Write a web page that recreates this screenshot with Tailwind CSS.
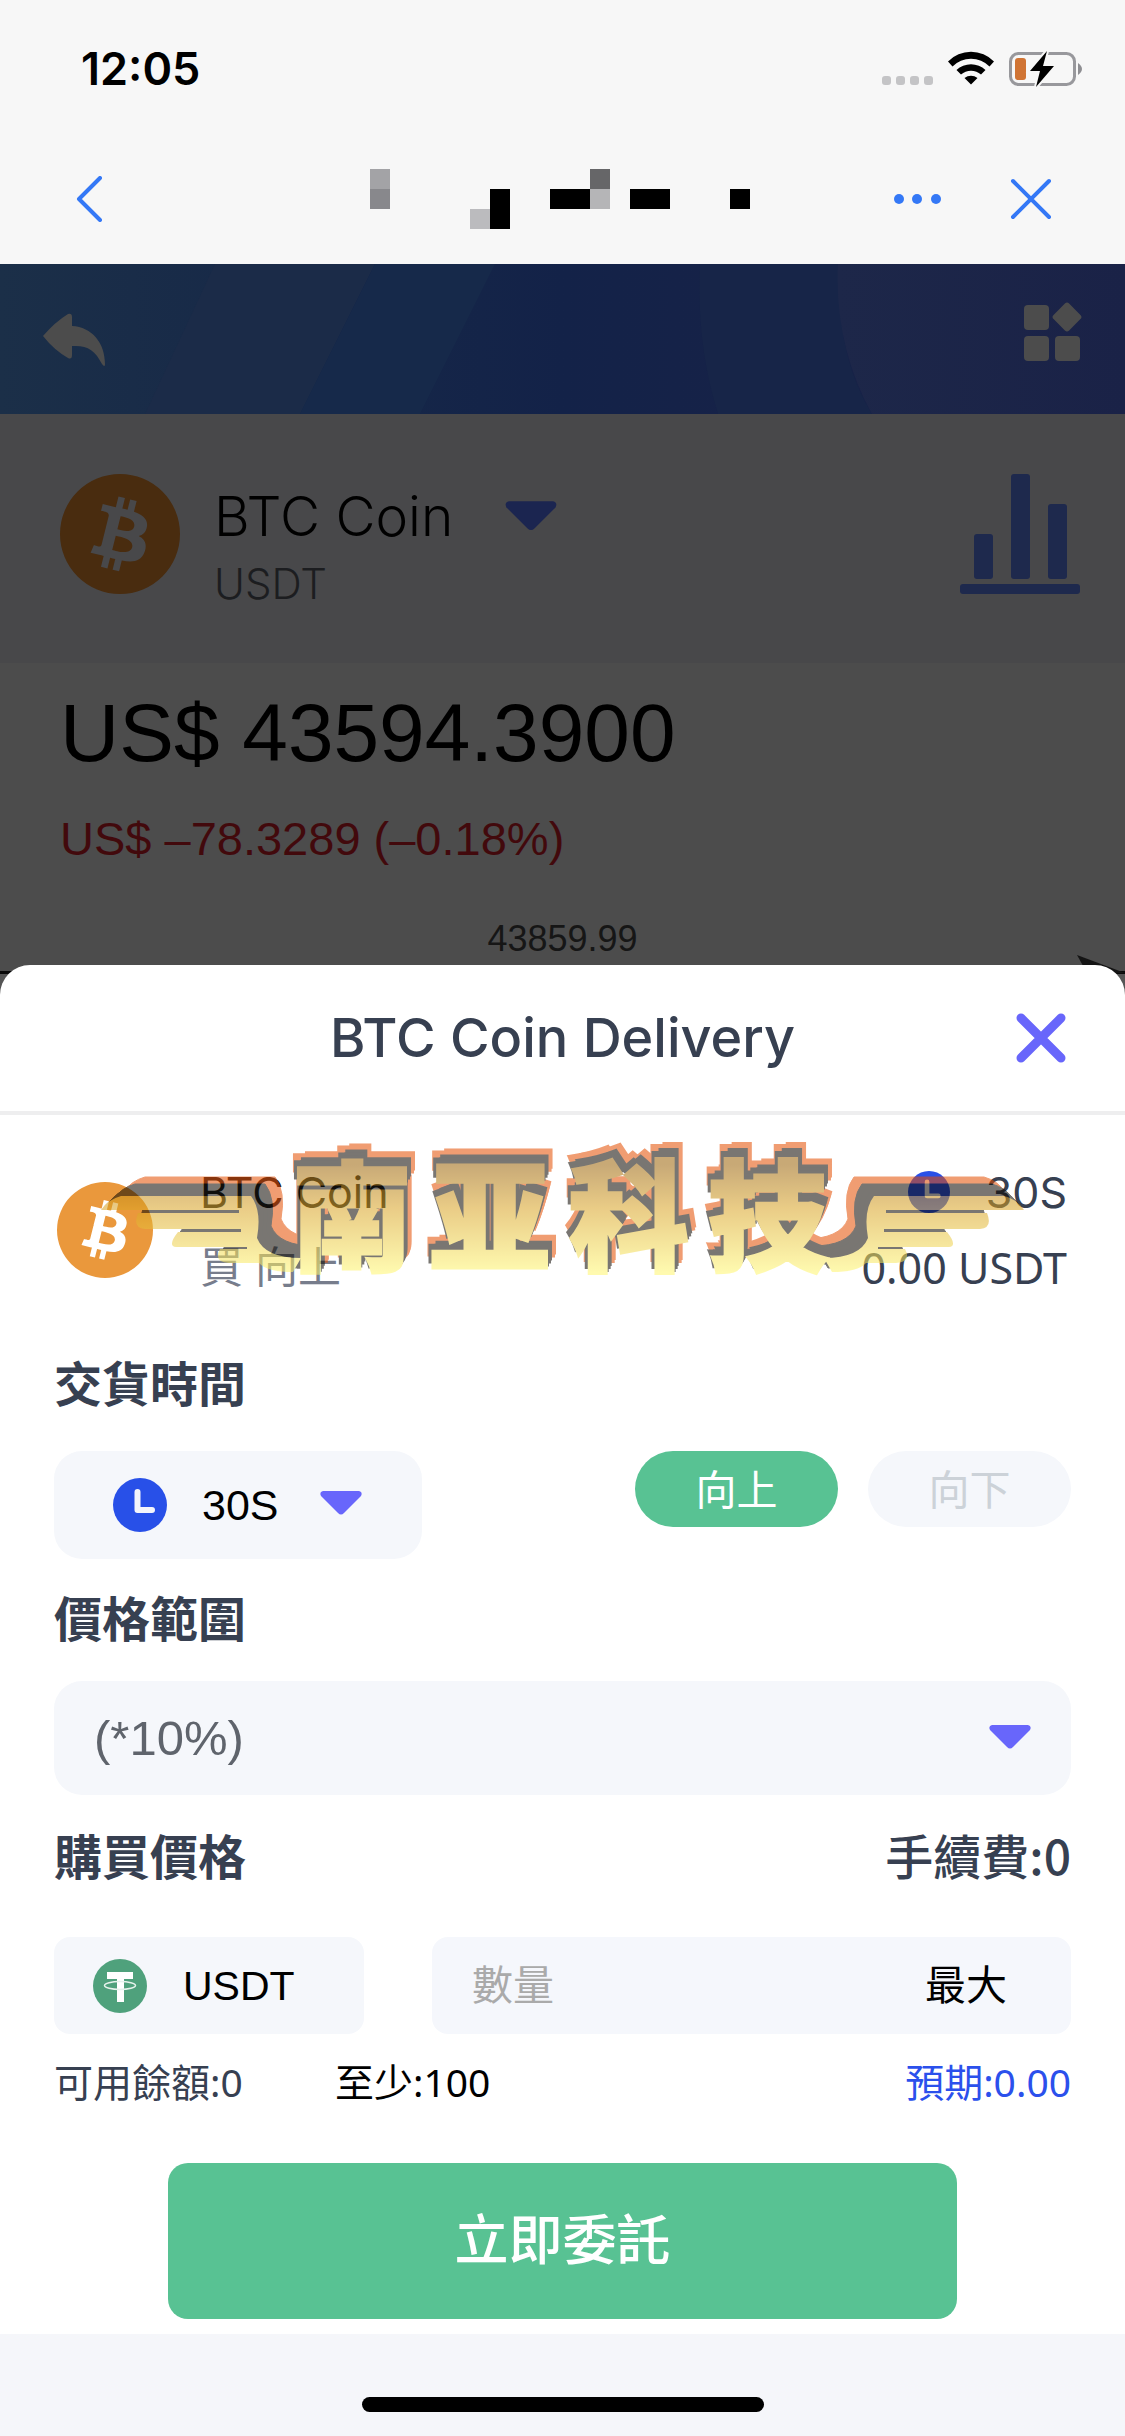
<!DOCTYPE html>
<html lang="zh-Hant">
<head>
<meta charset="utf-8">
<meta name="viewport" content="width=device-width, initial-scale=1">
<title>BTC Coin Delivery</title>
<script src="https://cdn.jsdelivr.net/npm/@tailwindcss/browser@4"></script>
</head>
<body class="flex min-h-screen flex-col bg-[#f5f6fa] font-['Liberation_Sans','Noto_Sans_CJK_TC',sans-serif] text-[42px] leading-[60px] text-[#374051]">

<!-- Shared shapes -->
<svg class="absolute size-0" aria-hidden="true">
  <defs>
    <symbol id="bitcoin" viewBox="0 0 32 32">
      <path fill-rule="evenodd" d="M16 0a16 16 0 1 0 0 32a16 16 0 0 0 0-32zM23.19 14.02c.314-2.096-1.283-3.223-3.465-3.975l.708-2.84-1.728-.43-.69 2.765c-.454-.114-.92-.22-1.385-.326l.695-2.783L15.596 6l-.708 2.839c-.376-.086-.746-.17-1.104-.26l.002-.009-2.384-.595-.46 1.846s1.283.294 1.256.312c.7.175.826.638.805 1.006l-.806 3.235c.048.012.11.03.18.057l-.183-.045-1.13 4.532c-.086.212-.303.531-.793.41.018.025-1.256-.313-1.256-.313l-.858 1.978 2.25.561c.418.105.828.215 1.231.318l-.715 2.872 1.727.43.708-2.84c.472.127.93.245 1.378.357l-.706 2.828 1.728.43.715-2.866c2.948.558 5.164.333 6.097-2.333.752-2.146-.037-3.385-1.588-4.192 1.13-.26 1.98-1.003 2.207-2.538zm-3.95 5.538c-.533 2.147-4.148.986-5.32.695l.95-3.805c1.172.293 4.929.872 4.37 3.11zm.535-5.569c-.487 1.953-3.495.96-4.47.717l.86-3.45c.975.243 4.118.696 3.61 2.733z"/>
    </symbol>
    <symbol id="clock" viewBox="0 0 54 54">
      <circle cx="27" cy="27" r="27" fill="#2850e8"/>
      <path d="M24.500 14v18H39" fill="none" stroke="#f4f5fb" stroke-width="6" stroke-linecap="round" stroke-linejoin="round"/>
    </symbol>
    <symbol id="caret" viewBox="0 0 44 26">
      <path d="M4 1h36q4 1 2 5L25 23q-3 3-6 0L2 6Q0 2 4 1z"/>
    </symbol>
  </defs>
</svg>

<header class="flex flex-col bg-[#f7f7f7] text-black">
  <div class="flex h-[138px] items-center justify-between pr-[42px] pl-[81px]">
    <time class="font-['Inter',sans-serif] text-[45px] font-semibold">12:05</time>
    <svg class="h-9 w-[202px]" viewBox="0 0 202 36" aria-hidden="true">
      <g fill="#c4c4c6"><rect x="1" y="25" width="9" height="9" rx="3"/><rect x="15" y="25" width="9" height="9" rx="3"/><rect x="29" y="25" width="9" height="9" rx="3"/><rect x="43" y="25" width="9" height="9" rx="3"/></g>
      <path d="M67 10.500A32 32 0 0 1 113 10.500L108.500 15.500A26 26 0 0 0 71.500 15.500zM75.500 19A21 21 0 0 1 104.500 19L100 23.500A15 15 0 0 0 80 23.500zM83.500 27A10.500 10.500 0 0 1 96.500 27L90 33.500z"/>
      <rect x="129.500" y="2.500" width="64" height="31" rx="8" fill="none" stroke="#98989c" stroke-width="3"/>
      <path d="M197 12q8 6 0 12z" fill="#8e8e92"/>
      <rect x="134" y="7" width="11" height="22" rx="3" fill="#d07434"/>
      <path d="M166 0L149 20h10l-4 16 18-21h-11z" stroke="#f7f7f7" stroke-width="4" paint-order="stroke"/>
    </svg>
  </div>
  <nav class="flex h-[126px] items-center justify-between pr-[73px] pb-1 pl-[76px]">
    <button type="button" aria-label="返回">
      <svg class="h-[46px] w-[27px]" viewBox="0 0 27 46" fill="none" stroke="#3478f6" stroke-width="4" stroke-linecap="round" stroke-linejoin="round"><path d="M24 2L3 23l21 21"/></svg>
    </button>
    <svg class="ml-[124px] h-[60px] w-[380px]" viewBox="0 0 380 60" shape-rendering="crispEdges" aria-hidden="true">
      <path fill="#a3a3a6" d="M0 0h20v20H0z"/><path fill="#88888c" d="M0 20h20v20H0z"/>
      <path fill="#bbbbbe" d="M100 40h20v20h-20z"/><path fill="#666668" d="M220 0h20v20h-20z"/><path fill="#b5b5b7" d="M220 20h20v20h-20z"/>
      <path d="M120 20h20v40h-20zM180 20h40v20h-40zM260 20h40v20h-40zM360 20h20v20h-20z"/>
    </svg>
    <div class="flex items-center gap-[67px]">
      <button type="button" aria-label="更多">
        <svg class="h-[42px] w-[50px]" viewBox="0 0 50 42" fill="#3478f6"><circle cx="6" cy="21" r="5"/><circle cx="24" cy="21" r="5"/><circle cx="43" cy="21" r="5"/></svg>
      </button>
      <button type="button" aria-label="關閉頁面">
        <svg class="size-[42px]" viewBox="0 0 42 42" fill="none" stroke="#3478f6" stroke-width="4" stroke-linecap="round"><path d="M3 3l36 36M39 3L3 39"/></svg>
      </button>
    </div>
  </nav>
</header>

<!-- Dimmed market page -->
<section class="bg-[#4c4c4c] text-black">
  <div class="relative flex h-[150px] items-center justify-between bg-linear-to-r from-[#1b2f48] via-[#132248] to-[#1c2248] px-10">
    <svg class="absolute inset-0 size-full" viewBox="0 0 1125 150" preserveAspectRatio="none" aria-hidden="true">
      <defs><linearGradient id="sheen"><stop offset="0" stop-color="#1d2749"/><stop offset="1" stop-color="#1a2247"/></linearGradient></defs>
      <path fill="#1b2b48" d="M215 0H375L300 150H145z"/><path fill="#16294a" d="M375 0H495L420 150H300z"/>
      <path fill="#172548" d="M700 0H840Q835 90 872 150H718Q696 80 700 0z"/><path fill="url(#sheen)" d="M838 0H1125V150H872Q834 80 838 0z"/>
    </svg>
    <a href="#" class="relative" aria-label="返回上頁"><svg class="h-16 w-[70px]" viewBox="0 0 70 64" fill="#4c4c4c"><path d="M3 29Q15 15 28 7q4-1 4 3v9c20 1 33 17 33 38q0 4-3 0C55 43 47 38 32 39v9q0 5-4 3Q14 43 3 29z"/></svg></a>
    <a href="#" class="relative" aria-label="選單"><svg class="size-16 overflow-visible" viewBox="0 0 64 64" fill="#4c4c4c"><rect x="3" y="-2" width="25" height="25" rx="4"/><rect x="3" y="29" width="25" height="25" rx="4"/><rect x="34" y="29" width="25" height="25" rx="4"/><rect x="35" y="-1" width="22" height="22" rx="3" transform="rotate(45 46 10)"/></svg></a>
  </div>
  <div class="flex h-[249px] items-center bg-[#48484a] pr-[45px] pb-[9px] pl-[60px]">
    <svg class="size-[120px]" fill="#492c0f" aria-hidden="true"><use href="#bitcoin"/></svg>
    <div class="ml-[34px] flex flex-col pt-6 font-['Inter',sans-serif] font-light">
      <div class="flex items-center">
        <h2 class="w-[290px] text-[55px] leading-[76px]">BTC Coin</h2>
        <svg class="h-8 w-[54px]" fill="#1b2550" aria-hidden="true"><use href="#caret"/></svg>
      </div>
      <p class="text-[42px] text-[#1c1d20]">USDT</p>
    </div>
    <svg class="ml-auto size-[120px]" viewBox="0 0 120 120" fill="#1e294d" aria-hidden="true"><rect x="14" y="60" width="19" height="45" rx="3"/><rect x="51" y="0" width="19" height="105" rx="3"/><rect x="88" y="30" width="19" height="75" rx="3"/><rect y="110" width="120" height="10" rx="3"/></svg>
  </div>
  <div class="pt-6 pl-[60px]">
    <p class="text-[82px] leading-[92px]">US$ 43594.3900</p>
    <p class="pt-[30px] text-[47px] leading-[60px] text-[#42090c]">US$ –78.3289 (–0.18%)</p>
  </div>
  <p class="pt-[50px] text-center text-[36px] leading-10 text-[#161616]">43859.99</p>
  <svg class="-mt-[10px] block h-12 w-full" viewBox="0 0 1125 48" preserveAspectRatio="none" aria-hidden="true">
    <path fill="#555" d="M0 25h1125v23H0z"/><path fill="#0a0a0a" d="M0 22h1125v3H0z"/><path fill="#141414" d="M1077 6L1125 24H1087z"/>
  </svg>
</section>

<!-- Order sheet -->
<main class="relative -mt-8 rounded-t-[30px] bg-white pb-[15px]">
  <div class="flex h-[150px] items-center border-b-4 border-[#eeeeef] pr-[59px] pl-[109px]">
    <h1 class="flex-1 text-center font-['Inter',sans-serif] text-[54px] font-medium">BTC Coin Delivery</h1>
    <button type="button" aria-label="關閉">
      <svg class="size-[50px]" viewBox="0 0 50 50" fill="none" stroke="#6866fb" stroke-width="9" stroke-linecap="round"><path d="M5 5l40 40M45 5L5 45"/></svg>
    </button>
  </div>

  <form class="flex flex-col px-[54px]">
    <div class="relative flex h-[230px] items-center pr-1 pl-[3px]">
      <svg class="size-24" fill="#ea983c" aria-hidden="true"><use href="#bitcoin"/></svg>
      <div class="ml-[47px] flex flex-col gap-4">
        <p class="font-['Inter',sans-serif] text-[43px] text-[#16181d]">BTC Coin</p>
        <p class="text-[43px] text-[#777d8c]">買 向上</p>
      </div>
      <div class="ml-auto flex flex-col items-end gap-4">
        <p class="flex items-center gap-9 font-['Inter',sans-serif] text-[43px]"><svg class="size-[42px]" aria-hidden="true"><use href="#clock"/></svg>30S</p>
        <p class="font-['Noto_Sans',sans-serif] text-[43px]">0.00 USDT</p>
      </div>
      <!-- Winged brand emblem over the summary -->
      <svg class="pointer-events-none absolute top-[35px] left-[46px] h-[125px] w-[925px] overflow-visible opacity-55" viewBox="0 0 925 125" role="img" aria-label="南亚科技">
        <defs>
          <linearGradient id="gold" gradientUnits="userSpaceOnUse" x1="0" y1="15" x2="0" y2="122"><stop offset="0" stop-color="#9c6408"/><stop offset=".4" stop-color="#d9a324"/><stop offset="1" stop-color="#fff66e"/></linearGradient>
          <path id="wing" d="M774 46H904Q918 50 924 60H786v3H887Q893 78 880 79H784v3H847Q858 96 849 97H778v2H805Q812 112 796 113H766Q758 122 732 122L724 108Q760 108 768 88Q763 60 774 46z"/>
          <g id="wing-left"><use href="#wing" transform="translate(925 0) scale(-1 1)"/></g>
          <g id="name" font-family="'Noto Sans CJK SC',sans-serif" font-size="120" font-weight="900" stroke-width="3" text-anchor="middle">
            <text x="252" y="112">南</text><text x="390" y="112">亚</text><text x="529" y="112">科</text><text x="668" y="112">技</text>
          </g>
        </defs>
        <g fill="#e54e00" stroke="#e54e00">
          <use href="#wing-left" x="24" y="-19"/><use href="#wing-left" x="19" y="-15"/><use href="#wing" x="-20" y="-19"/><use href="#wing" x="-16" y="-15"/>
          <use href="#name" x="8" y="-15"/><use href="#name" x="7" y="-12"/><use href="#name" x="-4" y="-13"/>
        </g>
        <g fill="#0c0800" stroke="#0c0800">
          <use href="#wing-left" x="14" y="-12"/><use href="#wing-left" x="9" y="-8"/><use href="#wing-left" x="5" y="-4"/>
          <use href="#wing" x="-12" y="-12"/><use href="#wing" x="-8" y="-8"/><use href="#wing" x="-4" y="-4"/>
          <use href="#name" x="4" y="-9"/><use href="#name" x="3" y="-6"/><use href="#name" x="-3" y="-6"/><use href="#name" x="1" y="-3"/>
        </g>
        <g fill="url(#gold)" stroke="url(#gold)"><use href="#wing-left" stroke="none"/><use href="#wing" stroke="none"/><use href="#name"/></g>
      </svg>
    </div>

    <label for="period" class="pt-px font-['Noto_Sans_CJK_TC',sans-serif] text-[48px] leading-[70px] font-bold">交貨時間</label>
    <div class="flex items-start justify-between pt-[35px]">
      <div class="relative">
        <select id="period" class="h-[108px] w-[368px] appearance-none rounded-[28px] bg-[#f5f7fb] pl-[148px] text-[43px] text-black"><option>30S</option></select>
        <svg class="pointer-events-none absolute top-[27px] left-[59px] size-[54px]" aria-hidden="true"><use href="#clock"/></svg>
        <svg class="pointer-events-none absolute top-[39px] left-[265px] h-[26px] w-11" fill="#6866fb" aria-hidden="true"><use href="#caret"/></svg>
      </div>
      <div class="flex gap-[30px] font-['Noto_Sans_CJK_TC',sans-serif] text-[41px]">
        <button type="button" class="h-[76px] w-[203px] rounded-full bg-[#58c293] pb-1 text-white">向上</button>
        <button type="button" class="h-[76px] w-[203px] rounded-full bg-[#f5f7fb] pb-1 text-[#ccd2d8]">向下</button>
      </div>
    </div>

    <label for="range" class="pt-[22px] font-['Noto_Sans_CJK_TC',sans-serif] text-[48px] leading-[70px] font-bold">價格範圍</label>
    <div class="relative mt-[30px]">
      <select id="range" class="h-[114px] w-full appearance-none rounded-[28px] bg-[#f5f7fb] pl-10 text-[49px] text-[#5f646c]"><option>(*10%)</option></select>
      <svg class="pointer-events-none absolute top-[43px] right-[39px] h-[26px] w-11" fill="#6866fb" aria-hidden="true"><use href="#caret"/></svg>
    </div>

    <div class="flex justify-between pt-[24px] font-['Noto_Sans_CJK_TC',sans-serif] text-[48px] leading-[70px]">
      <label for="amount" class="font-bold">購買價格</label>
      <p class="font-medium">手續費:0</p>
    </div>
    <div class="flex gap-[68px] pt-[48px]">
      <div class="flex h-[97px] w-[310px] items-center gap-9 rounded-2xl bg-[#f5f7fb] pl-[39px] text-black">
        <svg class="size-[54px]" viewBox="0 0 54 54" aria-hidden="true"><circle cx="27" cy="27" r="27" fill="#4fa17c"/><path fill="#fff" d="M14 13h26v7h-9v23h-7V20H14z"/><ellipse cx="27" cy="26.500" rx="15.500" ry="4" fill="none" stroke="#e6f2ec" stroke-width="1.500"/></svg>
        <span class="text-[41px]">USDT</span>
      </div>
      <div class="flex h-[97px] min-w-0 flex-1 items-center rounded-2xl bg-[#f5f7fc] pr-[64px] pl-10">
        <input id="amount" type="text" inputmode="decimal" placeholder="數量" class="min-w-0 flex-1 bg-transparent text-[41px] placeholder:text-[#aaaaaa]">
        <button type="button" class="text-[41px] text-black">最大</button>
      </div>
    </div>
    <div class="flex pt-[18px] font-['Noto_Sans','Noto_Sans_CJK_TC',sans-serif] text-[39px]">
      <p class="w-[281px]">可用餘額:0</p>
      <p class="text-black">至少:100</p>
      <p class="ml-auto text-[#2b50ec]">預期:0.00</p>
    </div>
    <button type="submit" class="mt-[51px] h-[156px] w-[789px] max-w-full self-center rounded-[20px] bg-[#58c293] text-[54px] font-medium text-white">立即委託</button>
  </form>
</main>

<footer class="flex h-[102px] items-end justify-center pb-6"><div class="h-[15px] w-[402px] rounded-full bg-black"></div></footer>
</body>
</html>
